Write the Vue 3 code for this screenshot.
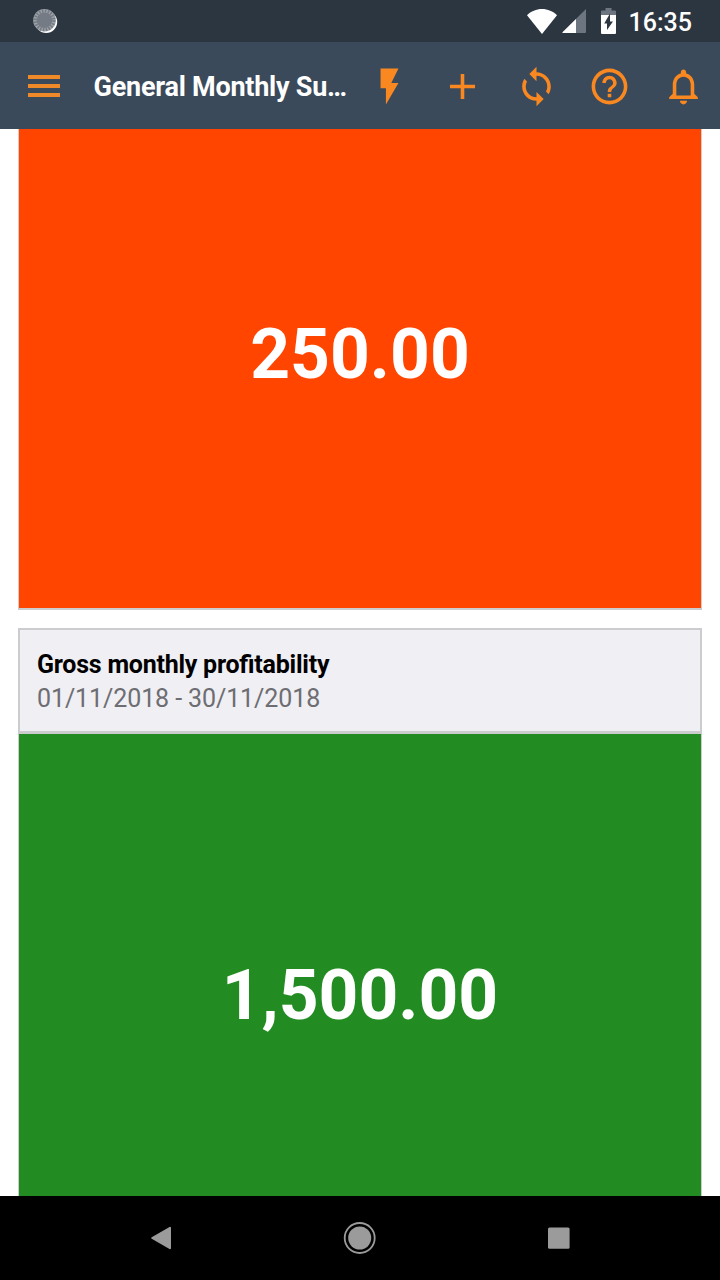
<template>
  <div class="app-container">
    <div class="status-bar">
      <svg class="sync-status" viewBox="0 0 28 28">
        <circle cx="15.2" cy="15" r="11" fill="#fff" />
        <circle cx="13.5" cy="13.3" r="11.3" fill="#a1a6ac" />
        <circle cx="13.5" cy="13.3" r="9.3" fill="none" stroke="#747b84" stroke-width="3.4" stroke-dasharray="1.65 1.27" />
        <circle cx="13.5" cy="13.3" r="7.8" fill="#747b84" />
      </svg>
      <div class="status-icons">
        <svg class="wifi" viewBox="0 0 30 25">
          <path d="M15 25 0 6.2C4 2.3 9.300 0 15 0s11 2.300 15 6.200z" fill="#fff" />
        </svg>
        <svg class="signal" viewBox="0 0 24 24">
          <path d="M24 0v23q0 1-1 1H1q-1 0-.5-.8z" fill="#6d7680" />
          <path d="M14 10v14H1q-1 0-.5-.8z" fill="#fff" />
        </svg>
        <svg class="battery" viewBox="0 0 15 26">
          <path d="M4.500 0h6v2.500H14q1 0 1 1V8H0V3.500q0-1 1-1h3.500z" fill="#6d7680" />
          <path d="M0 7h15v18q0 1-1 1H1q-1 0-1-1z" fill="#fff" />
          <path d="M9 5.500v8h3L6 22v-6.500H3.200z" fill="#2b3641" />
        </svg>
        <span class="clock">16:35</span>
      </div>
    </div>

    <div class="toolbar">
      <button class="menu">
        <span></span>
        <span></span>
        <span></span>
      </button>
      <div class="title">General Monthly Su…</div>
      <div class="actions">
        <button v-for="action in actions" :key="action.name" :aria-label="action.name">
          <svg viewBox="0 0 24 24"><path :d="action.icon" /></svg>
        </button>
      </div>
    </div>

    <div class="content">
      <div v-for="card in cards" :key="card.id" class="card">
        <div v-if="card.title" class="card-header">
          <div class="card-title">{{ card.title }}</div>
          <div class="card-period">{{ card.period }}</div>
        </div>
        <div class="card-value" :class="card.status">{{ card.value }}</div>
      </div>
    </div>

    <div class="nav-bar">
      <svg viewBox="0 0 40 40">
        <path d="M11.200 20 29 9.800V30.200z" stroke-width="2" stroke-linejoin="round" />
      </svg>
      <svg viewBox="0 0 40 40">
        <circle cx="19.700" cy="20" r="11.500" stroke="none" />
        <circle cx="19.700" cy="20" r="15" fill="none" stroke-width="1.800" />
      </svg>
      <svg viewBox="0 0 40 40">
        <rect x="9" y="9.400" width="21.600" height="21.400" rx="1.500" stroke="none" />
      </svg>
    </div>
  </div>
</template>

<script setup>
import { ref } from 'vue';

const actions = [
  { name: 'Quick action', icon: 'M7 2v11h3v9l7-12h-4l4-8z' },
  { name: 'Add', icon: 'M19 13h-6v6h-2v-6H5v-2h6V5h2v6h6v2z' },
  {
    name: 'Sync',
    icon: 'M12 4V1L8 5l4 4V6c3.31 0 6 2.69 6 6 0 1.01-.25 1.97-.7 2.8l1.46 1.46C19.54 15.03 20 13.57 20 12c0-4.42-3.58-8-8-8zm0 14c-3.31 0-6-2.69-6-6 0-1.01.25-1.97.7-2.8L5.24 7.74C4.46 8.97 4 10.43 4 12c0 4.42 3.58 8 8 8v3l4-4-4-4v3z'
  },
  {
    name: 'Help',
    icon: 'M11 18h2v-2h-2v2zm1-16C6.48 2 2 6.48 2 12s4.48 10 10 10 10-4.48 10-10S17.52 2 12 2zm0 18c-4.41 0-8-3.59-8-8s3.59-8 8-8 8 3.59 8 8-3.59 8-8 8zm0-14c-2.21 0-4 1.79-4 4h2c0-1.1.9-2 2-2s2 .9 2 2c0 2-3 1.75-3 5h2c0-2.25 3-2.5 3-5 0-2.21-1.79-4-4-4z'
  },
  {
    name: 'Notifications',
    icon: 'M12 22c1.1 0 2-.9 2-2h-4c0 1.1.9 2 2 2zm6-6v-5c0-3.07-1.63-5.64-4.5-6.32V4c0-.83-.67-1.5-1.5-1.5s-1.5.67-1.5 1.5v.68C7.64 5.36 6 7.92 6 11v5l-2 2v1h16v-1l-2-2zm-2 1H8v-6c0-2.48 1.51-4.5 4-4.5s4 2.02 4 4.5v6z'
  }
];

const cards = ref([
  { id: 1, value: '250.00', status: 'bad' },
  {
    id: 2,
    title: 'Gross monthly profitability',
    period: '01/11/2018 - 30/11/2018',
    value: '1,500.00',
    status: 'good'
  }
]);
</script>

<style>
html, body {
  margin: 0;
  padding: 0;
  background: #ffffff;
}
</style>

<style scoped>
.app-container {
  display: flex;
  flex-direction: column;
  width: 100%;
  height: 100vh;
  overflow: hidden;
  font-family: Roboto, 'Liberation Sans', sans-serif;
}

.status-bar {
  display: flex;
  justify-content: space-between;
  align-items: center;
  flex-shrink: 0;
  height: 42px;
  box-sizing: border-box;
  padding: 0 28px 0 31px;
  background: #2b3641;
}

.sync-status {
  width: 28px;
  height: 28px;
}

.status-icons {
  display: flex;
  align-items: center;
}

.wifi {
  width: 30px;
  height: 25px;
}

.signal {
  width: 24px;
  height: 24px;
  margin-left: 5px;
}

.battery {
  width: 15px;
  height: 26px;
  margin-left: 15px;
}

.clock {
  padding-top: 3px;
  margin-left: 13px;
  color: #ffffff;
  font-size: 25px;
  font-weight: 500;
  line-height: 39px;
}

.toolbar {
  display: flex;
  align-items: center;
  flex-shrink: 0;
  height: 87px;
  box-sizing: border-box;
  padding: 1px 0 0 28px;
  background: #3a4a5b;
}

button {
  display: flex;
  padding: 0;
  border: none;
  background: transparent;
  cursor: pointer;
}

.menu {
  flex-direction: column;
  gap: 5px;
  width: 32px;
  margin-right: 33.5px;
}

.menu span {
  width: 32px;
  height: 4px;
  background: #f08a28;
}

.title {
  width: 256px;
  padding-top: 2px;
  color: #ffffff;
  font-size: 27px;
  font-weight: 700;
  letter-spacing: -0.24px;
  line-height: 40px;
  white-space: nowrap;
}

.actions {
  display: flex;
  gap: 30.5px;
  margin-left: 18.3px;
}

.actions svg {
  width: 43px;
  height: 43px;
  fill: #fa8820;
}

.content {
  flex: 1;
  min-height: 0;
  overflow: hidden;
  padding: 0 18px;
}

.card {
  margin-bottom: 18px;
  border: 2px solid #cccccf;
  box-sizing: border-box;
}

/* the list is scrolled part way into the first card */
.card:first-child {
  margin-top: -38px;
}

.card-header {
  height: 104px;
  padding: 19px 17px 0;
  box-sizing: border-box;
  border-bottom: 3px solid #cccccf;
  background: #efeff4;
}

.card-title {
  color: #000000;
  font-size: 25px;
  font-weight: 700;
  font-feature-settings: 'liga' 1;
  letter-spacing: -0.24px;
  line-height: 32px;
}

.card-period {
  color: #6d6d72;
  font-size: 25px;
  letter-spacing: -0.1px;
  line-height: 35px;
}

.card-value {
  height: 515px;
  margin: 0 -1px;
  box-sizing: border-box;
  padding-top: 8px;
  color: #ffffff;
  font-size: 69.5px;
  font-weight: 700;
  line-height: 508px;
  text-align: center;
}

.card-value.bad {
  background: #ff4500;
}

.card-value.good {
  background: #228b22;
}

.nav-bar {
  display: flex;
  justify-content: center;
  align-items: center;
  gap: 159px;
  flex-shrink: 0;
  height: 84px;
  background: #000000;
}

.nav-bar svg {
  width: 40px;
  height: 40px;
  fill: #9b9b9b;
  stroke: #9b9b9b;
}
</style>
